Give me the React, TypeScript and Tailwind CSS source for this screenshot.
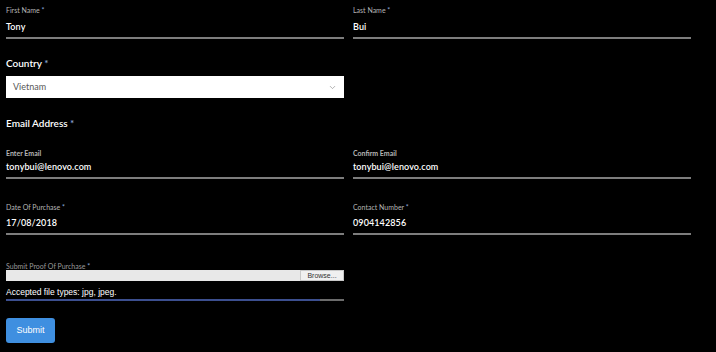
import { ChevronDown } from 'lucide-react'

function Label({ text, bold = false, required = false }: { text: string; bold?: boolean; required?: boolean }) {
  return (
    <div className={`text-[7px] leading-[8px] text-[#b5b5b5] ${bold ? 'font-bold' : ''}`}>
      {text}
      {required && <span className="text-[#8aa6d6]"> *</span>}
    </div>
  )
}

function Field({ label, value, bold, required, valueGap }: { label: string; value: string; bold?: boolean; required?: boolean; valueGap: string }) {
  return (
    <div className="border-b-2 border-[#7d7d7d] pb-[4px]">
      <Label text={label} bold={bold} required={required} />
      <div className={`${valueGap} text-[9px] leading-[12px] font-semibold text-white tracking-[0.1px]`}>{value}</div>
    </div>
  )
}

export default function App() {
  return (
    <div className="w-[716px] h-[352px] bg-black pl-[6px] overflow-hidden" style={{ fontFamily: 'Lato, "Noto Sans", sans-serif' }}>
      <div className="grid grid-cols-[338px_338px] gap-x-[9px] pt-[6px]">
        <Field label="First Name" value="Tony" required valueGap="mt-[7px]" />
        <Field label="Last Name" value="Bui" required valueGap="mt-[7px]" />
      </div>

      <div className="w-[338px]">
        <div className="mt-[18px] text-[10px] leading-[12px] font-semibold text-white">
          Country<span className="text-[#8aa6d6]"> *</span>
        </div>
        <div className="mt-[7px] h-[22px] bg-white flex items-center justify-between px-[7px]">
          <span className="text-[9px] text-[#585858]">Vietnam</span>
          <ChevronDown size={9} className="text-[#999]" />
        </div>
        <div className="mt-[19px] text-[10px] leading-[12px] font-semibold text-white">
          Email Address<span className="text-[#8aa6d6]"> *</span>
        </div>
      </div>

      <div className="grid grid-cols-[338px_338px] gap-x-[9px] mt-[20px]">
        <Field label="Enter Email" value="tonybui@lenovo.com" bold valueGap="mt-[4px]" />
        <Field label="Confirm Email" value="tonybui@lenovo.com" bold valueGap="mt-[4px]" />
      </div>

      <div className="grid grid-cols-[338px_338px] gap-x-[9px] mt-[24px]">
        <Field label="Date Of Purchase" value="17/08/2018" required valueGap="mt-[6px]" />
        <Field label="Contact Number" value="0904142856" required valueGap="mt-[6px]" />
      </div>

      <div className="w-[338px] mt-[28px]">
        <div className="text-[7px] leading-[7px] text-[#9a9a9a]">
          Submit Proof Of Purchase <span className="text-[#8aa6d6]">*</span>
        </div>
        <div className="h-[11px] bg-[#e8e8e8] flex justify-end">
          <div
            className="w-[44px] h-[11px] bg-[#f0f0f0] border border-[#c8c8c8] text-[7px] leading-[9px] text-[#333] text-center"
            style={{ fontFamily: '"Liberation Sans", Arial, sans-serif' }}
          >
            Browse...
          </div>
        </div>
        <div
          className="mt-[5px] text-[8.5px] leading-[12px] text-white"
          style={{ fontFamily: '"Liberation Sans", Arial, sans-serif' }}
        >
          Accepted file types: jpg, jpeg.
        </div>
        <div className="mt-[1px] flex h-[2px]">
          <div className="w-[314px] bg-[#3c4f8f]" />
          <div className="flex-1 bg-[#6b6b6b]" />
        </div>
        <button
          className="mt-[17px] w-[49px] h-[25px] bg-[#3f8fe0] rounded-[3px] text-white text-[9px]"
          style={{ fontFamily: '"Liberation Sans", Arial, sans-serif' }}
        >
          Submit
        </button>
      </div>
    </div>
  )
}
